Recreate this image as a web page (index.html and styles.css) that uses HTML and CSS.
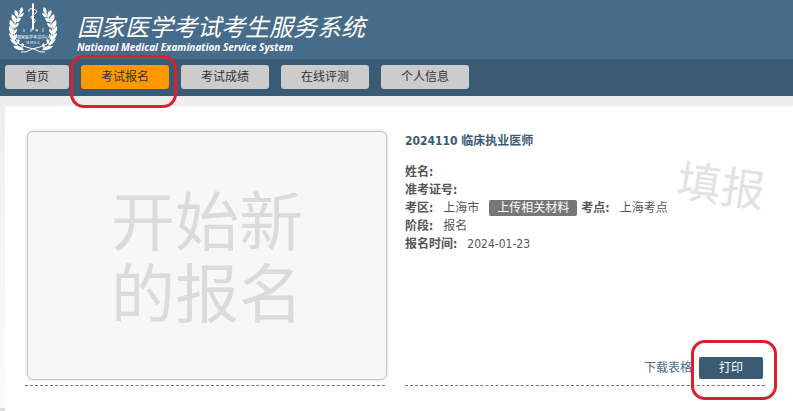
FILE: index.html
```html
<!DOCTYPE html>
<html lang="zh-CN">
<head>
    <meta charset="UTF-8">
    <meta name="viewport" content="width=device-width, initial-scale=1.0">
    <title>国家医学考试考生服务系统</title>
    <link rel="stylesheet" href="styles.css">
</head>
<body>
    <header class="header">
        <svg class="logo" width="50" height="54" viewBox="0 0 50 54" aria-hidden="true">
            <defs>
                <g id="branch">
                    <path d="M12 12Q-2 31 10 44Q18 48 25 49Q31 53 36 52" fill="none" stroke="#fff" stroke-width="1"/>
                    <path d="M11 14Q9 10 13 7Q16 11 11 14Z"/>
                    <path d="M9 18Q4 14 6 10Q11 12 9 18Z"/>
                    <path d="M10 17Q11 13 15 13Q14 18 10 17Z"/>
                    <path d="M6 23Q1 19 3 14Q9 17 6 23Z"/>
                    <path d="M7 22Q8 17 12 18Q11 23 7 22Z"/>
                    <path d="M4 29Q-1 25 1 20Q7 23 4 29Z"/>
                    <path d="M5 28Q6 23 10 23Q9 28 5 28Z"/>
                    <path d="M4 35Q-1 32 0 26Q6 29 4 35Z"/>
                    <path d="M4 34Q5 29 8 29Q8 34 4 34Z"/>
                    <path d="M6 41Q0 38 0 33Q7 35 6 41Z"/>
                    <path d="M5 40Q5 35 8 34Q9 38 5 40Z"/>
                    <path d="M9 46Q3 44 1 39Q8 40 9 46Z"/>
                    <path d="M8 44Q7 40 10 39Q12 42 8 44Z"/>
                    <path d="M15 50Q7 51 4 46Q12 45 15 50Z"/>
                    <path d="M13 48Q11 44 14 43Q16 46 13 48Z"/>
                </g>
            </defs>
            <g fill="#fff">
                <use href="#branch"/>
                <use href="#branch" transform="translate(48 0) scale(-1 1)"/>
                <path d="M23 4Q24 2 25 4L25 29L24 30L23 29Z"/>
                <path d="M20 12Q19 8 24 9Q29 10 27 13L23 16Q20 18 24 19Q28 20 25 23L23 25" fill="none" stroke="#fff" stroke-width="1"/>
                <path d="M15 29v3M21 29h2v2h-2M26 30h3M28 29v3M33 29h2M33 31h2" fill="none" stroke="#fff" stroke-width="1" opacity=".7"/>
                <text class="logo-text" x="24" y="39" text-anchor="middle">国家医学考试中心</text>
                <text class="logo-text" x="24" y="44" text-anchor="middle">N M E C</text>
            </g>
        </svg>
        <div class="brand">
            <h1>国家医学考试考生服务系统</h1>
            <p>National Medical Examination Service System</p>
        </div>
    </header>

    <nav class="nav">
        <a href="#">首页</a>
        <a href="#" class="active marked">考试报名</a>
        <a href="#">考试成绩</a>
        <a href="#">在线评测</a>
        <a href="#">个人信息</a>
    </nav>

    <main class="content">
        <section class="item">
            <button class="new-card">开始新<br>的报名</button>
        </section>

        <section class="item exam">
            <h2>2024110 临床执业医师</h2>
            <dl>
                <div><dt>姓名:</dt><dd></dd></div>
                <div><dt>准考证号:</dt><dd></dd></div>
                <div>
                    <dt>考区:</dt><dd>上海市</dd>
                    <dd><button class="upload">上传相关材料</button></dd>
                    <dt class="site">考点:</dt><dd>上海考点</dd>
                </div>
                <div><dt>阶段:</dt><dd>报名</dd></div>
                <div><dt>报名时间:</dt><dd>2024-01-23</dd></div>
            </dl>
            <span class="stamp">填报</span>
            <div class="actions">
                <a href="#">下载表格</a>
                <button class="print marked">打印</button>
            </div>
        </section>
    </main>
</body>
</html>
```

FILE: styles.css
```css
* { box-sizing: border-box; }
body {
    min-height: 100vh;
    display: flex;
    flex-direction: column;
    margin: 0;
    font: 12px/18px "DejaVu Sans Condensed", "Noto Sans CJK SC", sans-serif;
    color: #555;
    background: linear-gradient(#ddd, #ddd) bottom / 100% 3px no-repeat, linear-gradient(#eee 96px, #fbfbfb);
}
h1, h2, p, dl, dd { margin: 0; }
a { text-decoration: none; }
button {
    border: none;
    font: inherit;
    cursor: pointer;
}

/* header */
.header {
    display: flex;
    gap: 18px;
    height: 59px;
    padding-left: 9px;
    color: #fff;
    background: #476c89;
}
.logo { flex: none; }
.logo-text { font: 4px "Noto Sans CJK SC", sans-serif; }
.brand { padding-top: 12px; }
.brand h1 {
    font: italic 24px/28px "Noto Sans CJK SC", sans-serif;
}
.brand p {
    font: italic bold 10px/14px "Noto Sans", sans-serif;
}

/* menu */
.nav {
    display: flex;
    gap: 12px;
    padding: 6px 5px 7px;
    background: #3b5a74;
}
.nav a {
    padding: 0 20px;
    line-height: 24px;
    color: #333;
    background: #ccc;
    border-radius: 3px;
}
.nav .active { background: #f90; }

/* red pen frame round a control */
.marked { position: relative; }
.marked::after {
    content: "";
    position: absolute;
    inset: -10px -8px -19px -11px;
    border: 3px solid #d9202e;
    border-radius: 14px;
    pointer-events: none;
}

/* content */
.content {
    flex: 1;
    display: grid;
    grid-template-columns: 1fr 1fr;
    align-items: start;
    gap: 20px;
    margin: 10px 0 0 5px;
    padding: 25px 28px 25px 20px;
    background: #fff;
    border-radius: 4px 0 0 0;
}
.item {
    display: flex;
    flex-direction: column;
    height: 255px;
    border-bottom: 1px dashed #777;
}
.new-card {
    flex: 1;
    margin: 0 -2px 5px 2px;
    padding: 6px 0 0;
    font-size: 64px;
    line-height: 72px;
    color: #dbdbdb;
    background: #f7f7f7;
    border: 1px solid #c6c6c6;
    border-radius: 6px;
    box-shadow: 0 0 4px #ddd;
}
.exam {
    position: relative;
    padding-top: 1px;
}
.exam h2 {
    margin-bottom: 13px;
    font-size: 12px;
    line-height: 18px;
    color: #3b5a74;
}
.exam dl div {
    display: flex;
    align-items: center;
    gap: 10px;
    height: 18px;
}
dt { font-weight: bold; }
dd { display: flex; }
.site { margin-left: -6px; }
.upload {
    padding: 0 8px;
    line-height: 16px;
    color: #fff;
    background: #777;
    border-radius: 2px;
}
.stamp {
    position: absolute;
    top: 26px;
    right: 0;
    font-size: 44px;
    line-height: 60px;
    color: #e2e2e2;
    transform: rotate(8deg);
}
.actions {
    display: flex;
    justify-content: flex-end;
    align-items: center;
    gap: 7px;
    margin-top: auto;
    padding: 0 2px 6px 0;
}
.actions a { color: #476c89; }
.print {
    padding: 0 20px;
    line-height: 22px;
    color: #fff;
    background: #3b5a74;
    border-radius: 2px;
}
.print::after { inset: -17px -14px -21px -8px; }
```
